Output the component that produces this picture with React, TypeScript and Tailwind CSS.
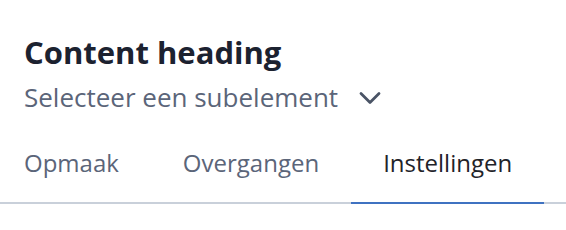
import React from "react";

export default function App() {
  const tabs = ["Opmaak", "Overgangen", "Instellingen"];
  const active = 2;
  return (
    <div className="w-[566px] h-[230px] bg-white" style={{ fontFamily: '"Open Sans", sans-serif' }}>
      <div className="pt-[32px] px-6">
        <h1 className="text-[31px] leading-[40px] font-bold text-[#1c2230]">Content heading</h1>
        <button className="mt-[7px] flex items-center gap-[21px] text-[26px] leading-[36px] text-[#5b6579]">
          <span>Selecteer een subelement</span>
          <svg width="22" height="14" viewBox="0 0 22 14" fill="none" className="mt-[2px]">
            <path d="M2 2.5l9 9 9-9" stroke="#4a5466" strokeWidth="2.8" strokeLinecap="round" strokeLinejoin="round" />
          </svg>
        </button>
      </div>
      <div className="flex border-b-2 border-[#c9d0da]">
        {tabs.map((t, i) => (
          <div
            key={t}
            className={
              (i === 0 ? "pl-6 pr-8 " : "px-8 ") +
              "pt-[32px] pb-[23px] -mb-[2px] text-[24px] leading-[32px] border-b-2 " +
              (i === active ? "border-[#3f72c1] text-[#1f2329]" : "border-transparent text-[#5b6579]")
            }
          >
            {t}
          </div>
        ))}
      </div>
    </div>
  );
}
